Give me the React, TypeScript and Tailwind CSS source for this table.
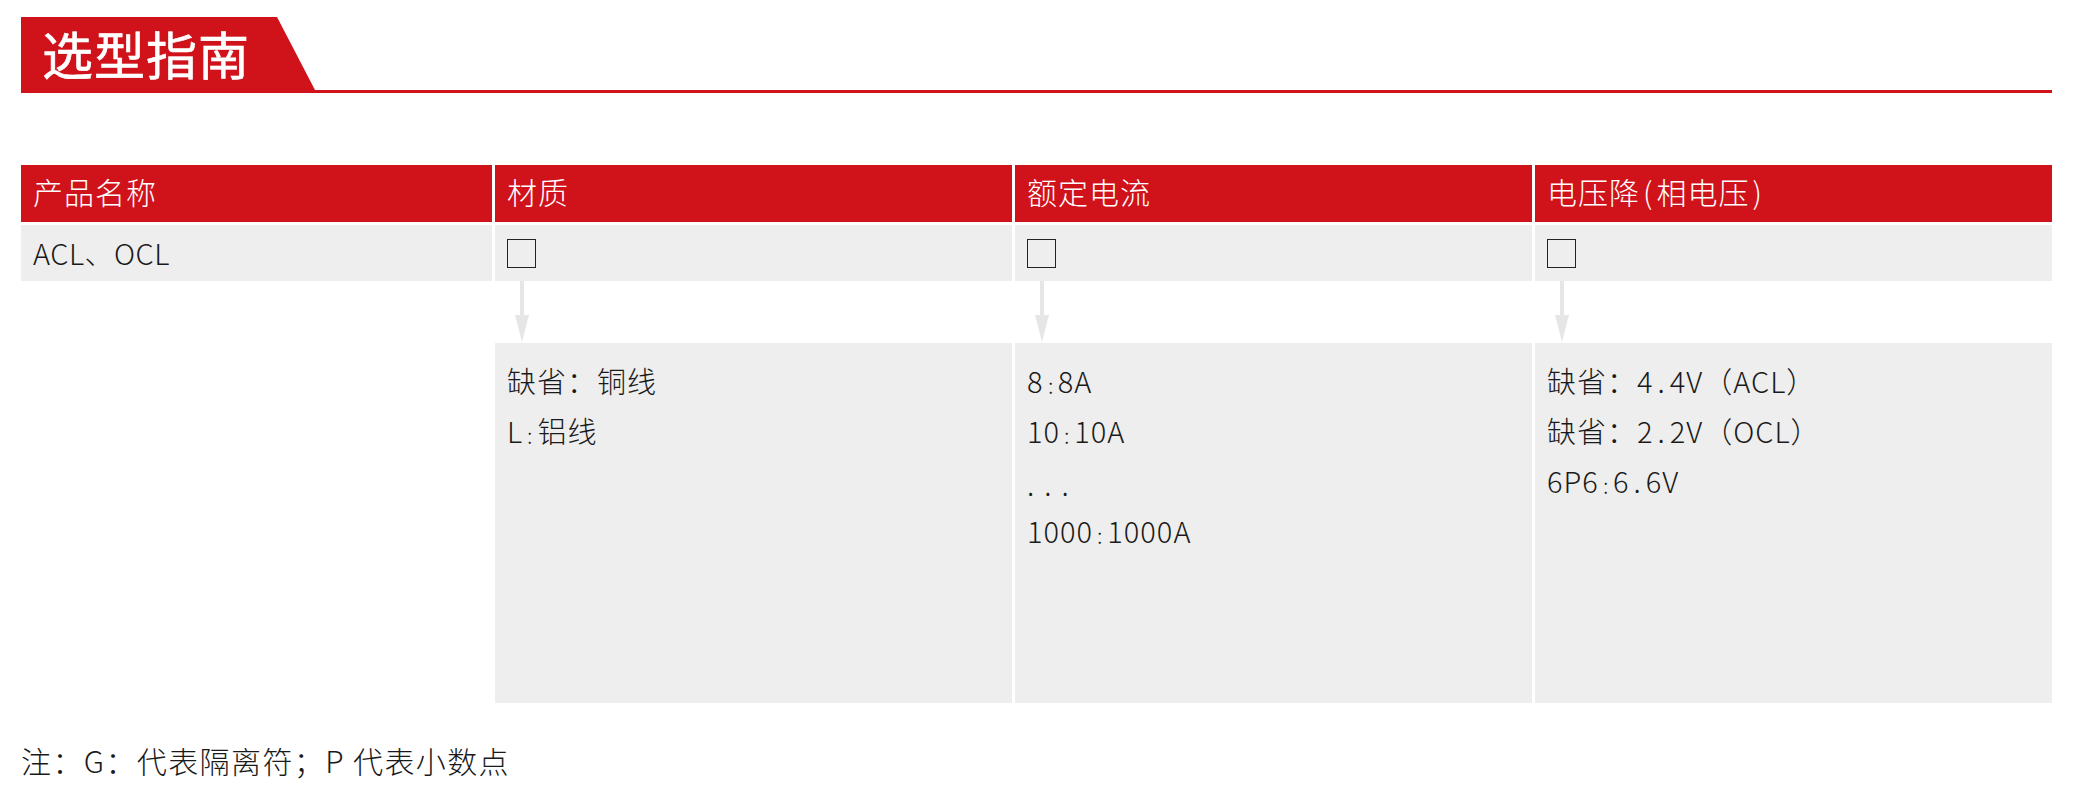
import React from "react";

const font = { fontFamily: '"Noto Sans CJK SC", "Noto Sans", sans-serif' };

const Arrow = () => (
  <div className="flex flex-col items-center w-[29px]">
    <div className="w-[4px] h-[34px] bg-[#e6e6e6]" />
    <div className="w-0 h-0 border-l-[7px] border-r-[7px] border-t-[27px] border-l-transparent border-r-transparent border-t-[#e6e6e6]" />
  </div>
);

const Box = () => <div className="w-[29px] h-[29px] border-[1.5px] border-[#222]" />;

// spaced punctuation, the way the source font sets it
const Spaced = ({ text }: { text: string }) => (
  <>
    {text.split(/([:.])/).map((p, i) =>
      p === ":" ? (
        <span key={i} className="inline-block mx-[3px] translate-y-[4px] scale-75">:</span>
      ) : p === "." ? (
        <span key={i} className="inline-block mx-[4px]">.</span>
      ) : (
        <span key={i}>{p}</span>
      )
    )}
  </>
);

const App = () => {
  const lists = [
    ["缺省：铜线", "L:铝线"],
    ["8:8A", "10:10A", "", "1000:1000A"],
    ["缺省：4.4V（ACL）", "缺省：2.2V（OCL）", "6P6:6.6V"],
  ];

  return (
    <div className="w-[2075px] h-[793px] bg-white pt-[17px] px-[21px] text-[#1a1a1a]" style={font}>
      {/* title */}
      <div className="w-[2031px]">
        <div className="h-[73px] w-[294px] bg-[#d0121b] [clip-path:polygon(0_0,256px_0,294px_100%,0_100%)] flex items-center pl-[21px]">
          <span className="text-white text-[51px] font-normal leading-none tracking-[1px] [-webkit-text-stroke:0.6px_white]">选型指南</span>
        </div>
        <div className="h-[3px] bg-[#d0121b]" />
      </div>

      {/* table */}
      <div className="mt-[72px] grid grid-cols-[471px_517px_517px_517px] gap-x-[3px]">
        <div className="h-[57px] bg-[#d0121b] text-white text-[30px] font-light tracking-[1px] flex items-center pl-3 pb-[5px] leading-none">产品名称</div>
        <div className="h-[57px] bg-[#d0121b] text-white text-[30px] font-light tracking-[1px] flex items-center pl-3 pb-[5px] leading-none">材质</div>
        <div className="h-[57px] bg-[#d0121b] text-white text-[30px] font-light tracking-[1px] flex items-center pl-3 pb-[5px] leading-none">额定电流</div>
        <div className="h-[57px] bg-[#d0121b] text-white text-[30px] font-light tracking-[1px] flex items-center pl-3 pb-[5px] leading-none">
          电压降<span className="mx-[3px]">(</span>相电压<span className="ml-[3px]">)</span>
        </div>
        <div className="col-span-4 h-[3px]" />
        <div className="h-[56px] bg-[#eeeeee] flex items-center pl-3 text-[29px] font-light tracking-[0.5px]">ACL、OCL</div>
        {[0, 1, 2].map((i) => (
          <div key={i} className="h-[56px] bg-[#eeeeee] flex items-center pl-3">
            <Box />
          </div>
        ))}
        <div className="h-[62px]" />
        {[0, 1, 2].map((i) => (
          <div key={i} className="h-[62px] pl-3">
            <Arrow />
          </div>
        ))}
        <div className="h-[360px]" />
        {lists.map((l, i) => (
          <div key={i} className="h-[360px] bg-[#eeeeee] pl-3 pt-[12px] text-[29px] font-light tracking-[1px]">
            {l.map((t, j) => (
              <div key={j} className="leading-[50px] h-[50px]">
                {t === "" ? (
                  <span className="tracking-[10px] relative top-[3px]">...</span>
                ) : (
                  <Spaced text={t} />
                )}
              </div>
            ))}
          </div>
        ))}
      </div>

      {/* note */}
      <div className="mt-[35px] text-[30px] font-light tracking-[1.4px] leading-[45px]">注：G：代表隔离符；P 代表小数点</div>
    </div>
  );
};

export default App;
